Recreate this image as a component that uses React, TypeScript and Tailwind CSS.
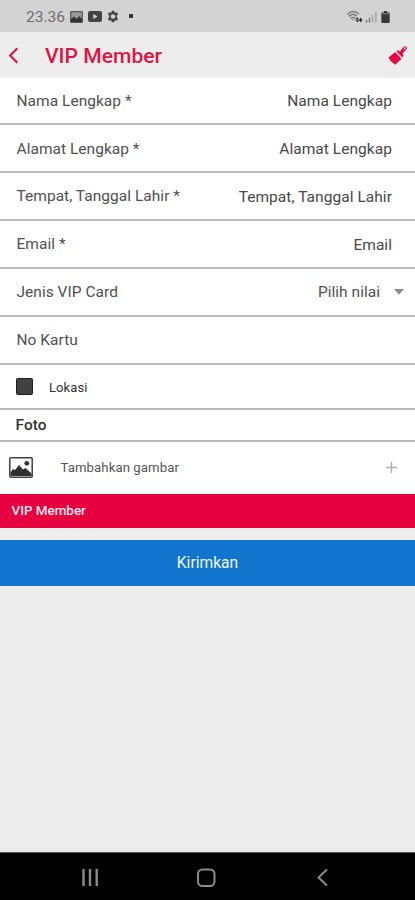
import type { ReactNode } from 'react';

function Row({ label, children, className }: { label: string; children?: ReactNode; className: string }) {
  return (
    <div className={`flex items-center justify-between border-b-2 border-[#bcbcbc] bg-white pl-[16.5px] text-[15.5px] text-[#505050] ${className}`}>
      <span className="pt-0.5 tracking-[0.03px]">{label}</span>
      {children}
    </div>
  );
}

function Value({ text }: { text: string }) {
  return <span className="mr-[23px] pt-[3px] tracking-[0.05px] text-[#484848]">{text}</span>;
}

function StatusBar() {
  return (
    <div className="flex h-8 items-center bg-[#d3d3d3] pl-[26px] pr-[25px] text-[#4a4a4a]">
      <span className="w-[44px] pt-0.5 text-[15.5px] leading-5 text-[#6c6c6c]">23.36</span>
      <svg className="mt-px" width="13" height="12" viewBox="0 0 13 12">
        <rect x=".7" y=".7" width="11.6" height="10.6" rx=".6" fill="#999" stroke="#585858" strokeWidth="1.3" />
        <path d="M1 11V8l3-2.500 3 2.500 2-3 3 3v3z" fill="#333" />
      </svg>
      <svg className="ml-[5px] mt-px" width="14" height="11" viewBox="0 0 14 11">
        <path fillRule="evenodd" fill="#444" d="M2 0h10q2 0 2 2v7q0 2-2 2H2q-2 0-2-2V2q0-2 2-2zm3.300 3v5l4.200-2.500z" />
      </svg>
      <svg className="ml-[5px] mt-px" width="12" height="13" viewBox="0 0 24 24">
        <path d="M10 1h4l.7 3.100 1.900 1.100 3-1 2 3.500L19.300 10v4l2.300 2.300-2 3.500-3-1-1.900 1.100L14 23h-4l-.7-3.100-1.900-1.100-3 1-2-3.500L4.700 14v-4L2.400 7.700l2-3.500 3 1 1.900-1.100zm2 6a5 5 0 1 0 0 10 5 5 0 0 0 0-10z" fill="#414141" fillRule="evenodd" stroke="#414141" />
      </svg>
      <span className="ml-[10px] size-[3.5px] bg-[#353535]" />
      <span className="grow" />
      <svg className="mt-px" width="16" height="13" viewBox="0 0 16 13">
        <g fill="none" stroke="#777" strokeWidth="1.3">
          <path d="M.5 4Q6 -1 12 4M2.400 6Q6 2.500 10 6M4.500 8.300Q6.300 6.500 8.500 8.300" />
          <path d="M.6 4l5.700 6.500 2-2" strokeWidth=".8" />
        </g>
        <path d="M8.500 9.500l2-2.500 1.500 2.500zM8.500 10h3.500l-1.600 2.500zM12 10l1.600-2.500L15.500 10l-1.900 2.500z" fill="#333" />
      </svg>
      <svg className="ml-[2px] mt-px" width="13" height="12" viewBox="0 0 13 12">
        <path d="M1.500 9v2.500M4.500 7v4.500" stroke="#777" strokeWidth="1.5" />
        <path d="M7.500 4v7.500M10.800 1v10.500" stroke="#aaa" strokeWidth="1.8" />
      </svg>
      <svg className="ml-[3px] mt-px" width="9" height="12" viewBox="0 0 9 12">
        <path d="M2.800 0h3.400v1.500H8q.7 0 .7.700v9q0 .8-.7.800H1q-.7 0-.7-.8v-9q0-.7.7-.7h1.800z" fill="#393939" />
        <path d="M.8 2h7.400v1.500H.8z" fill="#6b6b6b" />
      </svg>
    </div>
  );
}

export default function App() {
  return (
    <div className="flex h-[900px] w-[415px] flex-col overflow-hidden bg-[#ededed] font-['Roboto','Liberation_Sans',sans-serif]">
      <StatusBar />
      <header className="flex h-[46px] items-center bg-[#ededed] pl-[8px] pr-[8px]">
        <svg className="mt-px" width="11" height="17" viewBox="0 0 11 18" fill="none" stroke="#dc1644" strokeWidth="2.3">
          <path d="M9.500 1.300L2 9l7.500 7.700" />
        </svg>
        <h1 className="ml-[26px] pt-0.5 text-[21.1px] font-medium leading-7 text-[#dc1644]">VIP Member</h1>
        <span className="grow" />
        <svg width="19" height="19" viewBox="0 0 19 19" fill="#e20b45">
          <path d="M.5 11.600L7.300 6l6.300 6.800-6.500 6-3-2.500-1.500-1.300z" />
          <path d="M8.400 5.200l1.500-1 2 1.200L15.600.8q1.400-1.200 2.700 0 1.300 1.300 0 2.700L14.500 7.600l1 2-1.100 1.900z" />
          <path d="M7.200 5.900L13.900 12.900" stroke="#f4a2b6" strokeWidth=".6" />
          <circle cx="16.700" cy="2.300" r="1.100" fill="#f6c7d2" />
        </svg>
      </header>

      <main>
        <Row label="Nama Lengkap *" className="h-[47px]"><Value text="Nama Lengkap" /></Row>
        <Row label="Alamat Lengkap *" className="h-12 pt-px"><Value text="Alamat Lengkap" /></Row>
        <Row label="Tempat, Tanggal Lahir *" className="h-12"><Value text="Tempat, Tanggal Lahir" /></Row>
        <Row label="Email *" className="h-12"><Value text="Email" /></Row>
        <Row label="Jenis VIP Card" className="h-12">
          <span className="flex items-center pr-[11px]">
            <span className="pt-0.5 tracking-[0.03px]">Pilih nilai</span>
            <svg className="ml-[14px]" width="10" height="6" viewBox="0 0 10 6"><path d="M0 0h10L5 5.800z" fill="#8b8b8b" /></svg>
          </span>
        </Row>
        <Row label="No Kartu" className="h-12" />
        <div className="flex h-[45px] items-center border-b-2 border-[#bcbcbc] bg-white pl-4">
          <span className="size-[17px] rounded-[1.5px] border-[1.5px] border-[#1d1d1d] bg-[#414141]" />
          <span className="ml-4 pt-0.5 text-[13px] tracking-[0.1px] text-[#333]">Lokasi</span>
        </div>
        <div className="flex h-8 items-center border-b-2 border-[#bcbcbc] bg-white pl-[15.5px] pt-px text-[15.5px] font-medium text-[#333]">Foto</div>
        <div className="flex h-[52px] items-center bg-white pl-[9px] pr-[18px]">
          <svg className="-mt-0.5" width="24" height="21" viewBox="0 0 24 21">
            <rect x=".8" y=".8" width="22.400" height="19.400" rx="1" fill="white" stroke="#404040" strokeWidth="1.5" />
            <path d="M1.500 19v-3.500l2.500-3.500 2 1 4-5 4 4.500 2.500-1.500 6 5.500v2.500z" fill="#303030" />
            <circle cx="17.800" cy="6.300" r="2.400" fill="#333" />
          </svg>
          <span className="ml-[27.5px] text-[13.2px] tracking-[0.07px] text-[#555]">Tambahkan gambar</span>
          <span className="grow" />
          <svg className="-mt-px" width="11" height="11" viewBox="0 0 11 11"><path d="M0 5.500h11M5.500 0v11" stroke="#aaa" strokeWidth="1.4" /></svg>
        </div>
        <div className="flex h-[34px] items-center bg-[#e70040] pl-[11.5px] text-[13.4px] font-medium text-[#ffe9ee]">VIP Member</div>
        <button className="mt-3 flex h-[46px] w-full items-center justify-center bg-[#1174cd] pt-px text-[15.6px] text-[#f2f7ff]">Kirimkan</button>
      </main>

      <nav className="mt-auto h-12 border-t border-[#555] bg-black">
        <svg width="415" height="47" viewBox="0 0 415 47" fill="none" stroke="#8b8b8b" strokeWidth="2">
          <path d="M83.500 16v17M90 16v17M96.700 16v17" strokeWidth="2.4" />
          <rect x="198" y="16.500" width="16.500" height="16.500" rx="4.5" />
          <path d="M327 16.500L318.500 24.500l8.500 8" />
        </svg>
      </nav>
    </div>
  );
}
